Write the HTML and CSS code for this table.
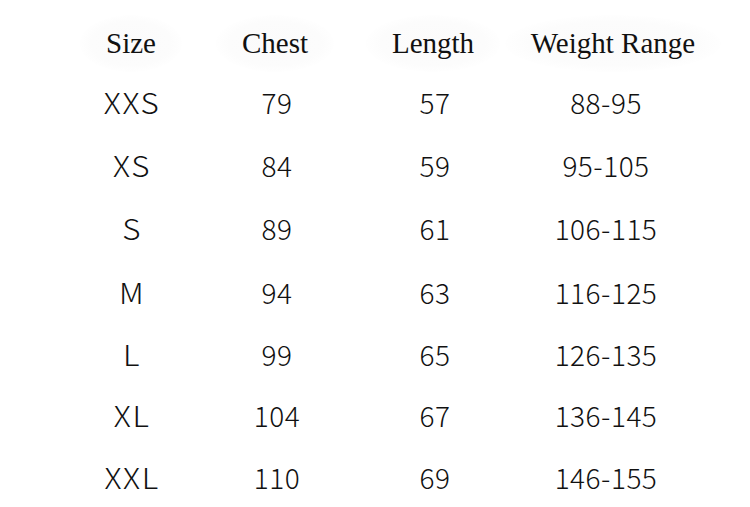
FILE: index.html
```html
<!DOCTYPE html>
<html>
<head>
<meta charset="utf-8">
<link rel="stylesheet" href="styles.css">
</head>
<body>
<div class="chart">
  <div class="head c1"><span class="halo">Size</span></div>
  <div class="head c2"><span class="halo">Chest</span></div>
  <div class="head c3"><span class="halo">Length</span></div>
  <div class="head c4"><span class="halo">Weight Range</span></div>

  <div class="cell size">XXS</div><div class="cell">79</div><div class="cell">57</div><div class="cell">88-95</div>
  <div class="cell size">XS</div><div class="cell">84</div><div class="cell">59</div><div class="cell">95-105</div>
  <div class="cell size">S</div><div class="cell">89</div><div class="cell">61</div><div class="cell">106-115</div>
  <div class="cell size">M</div><div class="cell">94</div><div class="cell">63</div><div class="cell">116-125</div>
  <div class="cell size">L</div><div class="cell">99</div><div class="cell">65</div><div class="cell">126-135</div>
  <div class="cell size">XL</div><div class="cell">104</div><div class="cell">67</div><div class="cell">136-145</div>
  <div class="cell size">XXL</div><div class="cell">110</div><div class="cell">69</div><div class="cell">146-155</div>
</div>
</body>
</html>
```

FILE: styles.css
```css
html, body {
  margin: 0;
  padding: 0;
  background: #ffffff;
}

.chart {
  display: grid;
  grid-template-columns: 142px 150px 166px 176px;
  grid-template-rows: 71px 62px 63px 64px 64px 60px 61px 64px;
  margin-left: 60px;
  width: 634px;
}

.head {
  display: flex;
  justify-content: center;
  align-items: center;
  font-family: "Liberation Serif", "Times New Roman", serif;
  font-size: 29px;
  color: #111;
  padding-top: 16px;
  white-space: nowrap;
}

.head.c2 { margin-left: -4px; }
.head.c3 { margin-left: -4px; }
.head.c4 { padding-left: 14px; }

.halo {
  padding: 14px 26px;
  border-radius: 50%;
  background: radial-gradient(ellipse at center, #fbfbfb 0%, #fcfcfc 55%, rgba(255,255,255,0) 75%);
  line-height: 1;
}

.cell {
  display: flex;
  justify-content: center;
  align-items: center;
  font-family: "Noto Sans CJK KR", "Noto Sans", sans-serif;
  font-weight: 300;
  font-size: 28px;
  line-height: 1;
  color: #111;
  white-space: nowrap;
  letter-spacing: 0.5px;
}

.cell.size {
  letter-spacing: 1.5px;
  padding-left: 2px;
  transform: scaleX(1.12);
}
```
